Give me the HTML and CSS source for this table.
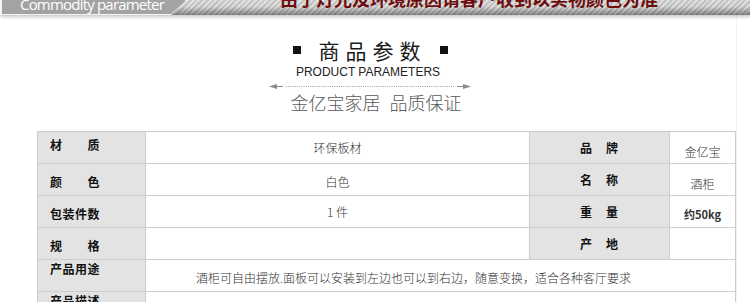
FILE: index.html
```html
<!DOCTYPE html>
<html lang="zh-CN">
<head>
<meta charset="utf-8">
<title>商品参数</title>
<link rel="stylesheet" href="styles.css">
</head>
<body>
<div class="topbar">
  <div class="tab"><span class="tab-text">Commodity parameter</span></div>
  <div class="notice">由于灯光及环境原因请客户收到以实物颜色为准</div>
</div>
<div class="content">
  <div class="heading">
    <div class="h-title"><span class="sq"></span><span class="h-cn">商品参数</span><span class="sq"></span></div>
    <div class="h-en">PRODUCT PARAMETERS</div>
    <svg class="h-rule" width="202" height="7" viewBox="0 0 202 7">
      <path d="M0 3.5 L8 1 L8 3 L14 3 L14 4 L8 4 L8 6 Z" fill="#8a8a8a"/>
      <line x1="17" y1="3.5" x2="186" y2="3.5" stroke="#9a9a9a" stroke-width="1" stroke-dasharray="1 1.2"/>
      <path d="M202 3.5 L194 1 L194 3 L188 3 L188 4 L194 4 L194 6 Z" fill="#8a8a8a"/>
    </svg>
    <div class="h-sub"><span>金亿宝家居</span><span>品质保证</span></div>
  </div>
  <table class="params">
    <colgroup>
      <col class="c1"><col class="c2"><col class="c3"><col class="c4">
    </colgroup>
    <tr class="r1">
      <th class="lab">材　　质</th>
      <td class="val">环保板材</td>
      <th class="lab2">品　牌</th>
      <td class="val2 low">金亿宝</td>
    </tr>
    <tr>
      <th class="lab">颜　　色</th>
      <td class="val low">白色</td>
      <th class="lab2">名　称</th>
      <td class="val2 low">酒柜</td>
    </tr>
    <tr>
      <th class="lab">包装件数</th>
      <td class="val">1 件</td>
      <th class="lab2">重　量</th>
      <td class="val2 bold">约50kg</td>
    </tr>
    <tr>
      <th class="lab">规　　格</th>
      <td class="val"></td>
      <th class="lab2">产　地</th>
      <td class="val2"></td>
    </tr>
    <tr class="r5">
      <th class="lab top">产品用途</th>
      <td class="desc" colspan="3">酒柜可自由摆放.面板可以安装到左边也可以到右边，随意变换，适合各种客厅要求</td>
    </tr>
    <tr class="r6">
      <th class="lab top">产品描述</th>
      <td class="desc" colspan="3"></td>
    </tr>
  </table>
</div>
</body>
</html>
```
FILE: styles.css
```css
html, body {
  margin: 0;
  padding: 0;
  background: #ffffff;
}
body {
  width: 750px;
  height: 302px;
  overflow: hidden;
  font-family: "Noto Sans CJK SC", "Liberation Sans", sans-serif;
  color: #222;
}
.topbar {
  height: 15px;
  display: flex;
  overflow: hidden;
  background:
    linear-gradient(to bottom, rgba(255,255,255,0.15) 0%, rgba(0,0,0,0) 45%, rgba(0,0,0,0.38) 100%),
    repeating-linear-gradient(135deg, #dcdcdc 0 2px, #bdbdbd 2px 4px);
  box-shadow: 0 2px 3px rgba(0,0,0,0.22);
  position: relative;
  z-index: 1;
}
.tab {
  flex: 0 0 187px;
  height: 15px;
  background: #f4f4f4;
  clip-path: polygon(0 0, 187px 0, 171px 15px, 0 15px);
  display: flex;
}
.tab-text {
  flex: 1;
  height: 14px;
  margin: 0 2px 1px 2px;
  background: #a3a3a3;
  clip-path: polygon(0 0, 185px 0, 169px 14px, 0 14px);
  color: #fff;
  font-family: "Open Sans", "DejaVu Sans", sans-serif;
  font-size: 15px;
  line-height: 9px;
  letter-spacing: -0.8px;
  padding-left: 18px;
  white-space: nowrap;
}
.notice {
  margin-left: 93px;
  margin-top: -11px;
  font-size: 18px;
  line-height: 18px;
  height: 18px;
  font-weight: bold;
  color: #6e0d0d;
  white-space: nowrap;
}
.content {
  width: 736px;
  border-right: 1px solid #f3f3f3;
  min-height: 287px;
}
.heading {
  display: flex;
  flex-direction: column;
  align-items: center;
  padding-top: 23px;
}
.h-title {
  display: flex;
  align-items: center;
  height: 24px;
  gap: 18px;
  margin-left: 4px;
}
.sq {
  width: 8px;
  height: 8px;
  background: #111;
}
.h-cn {
  font-size: 21px;
  line-height: 24px;
  letter-spacing: 6px;
  margin-right: -5px;
  color: #1a1a1a;
}
.h-en {
  margin-top: 3px;
  font-family: "Liberation Sans", Arial, sans-serif;
  font-size: 12px;
  line-height: 14px;
  color: #222;
}
.h-rule {
  display: block;
  margin-top: 4px;
  margin-left: 4px;
}
.h-sub {
  margin-top: 1px;
  display: flex;
  gap: 9px;
  font-size: 18px;
  line-height: 22px;
  font-weight: 300;
  color: #5a5a5a;
  margin-left: 16px;
}
.params {
  margin-top: 18px;
  margin-left: 37px;
  width: 698px;
  border-collapse: collapse;
  table-layout: fixed;
  line-height: 16px;
}
.c1 { width: 108px; }
.c2 { width: 384px; }
.c3 { width: 140px; }
.c4 { width: 66px; }
.params th, .params td {
  border: 1px solid #cdcdcd;
  height: 32px;
  padding: 0;
  line-height: 16px;
  vertical-align: middle;
  box-sizing: border-box;
}
.lab {
  background: #e3e3e3;
  text-align: left;
  padding-left: 12px !important;
  font-size: 12px;
  letter-spacing: 0.5px;
  font-weight: bold;
  color: #111;
  padding-top: 4px !important;
}
.r1 .lab { padding-top: 0 !important; padding-bottom: 5px !important; }
.lab.top {
  vertical-align: top;
  padding-top: 1px !important;
}
.lab2 {
  background: #e3e3e3;
  text-align: center;
  font-size: 12px;
  font-weight: bold;
  letter-spacing: 1px;
  color: #111;
}
.val {
  text-align: center;
  font-size: 12px;
  color: #333;
  font-weight: 300;
}
.val.low { padding-top: 4px !important; }
.val2 {
  text-align: center;
  font-size: 12px;
  color: #333;
  font-weight: 300;
}
.val2.low { padding-top: 8px !important; }
.val2.bold {
  font-weight: bold;
  font-size: 11px;
  padding-top: 4px !important;
}
.desc {
  text-align: left;
  padding-left: 50px !important;
  font-size: 12px;
  color: #333;
  font-weight: 300;
  vertical-align: bottom !important;
  padding-bottom: 5px !important;
}
.r6 th, .r6 td { height: 20px; }
```
